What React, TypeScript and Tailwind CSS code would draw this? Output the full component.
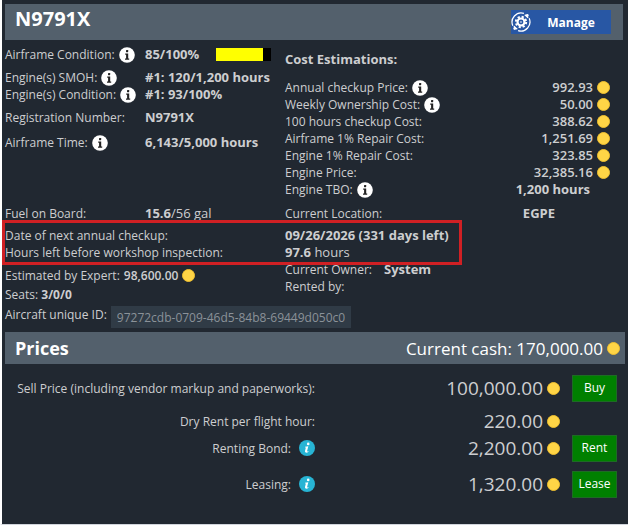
import type { ReactNode } from 'react';
import { clsx } from 'clsx';

const costs = [
  { label: 'Annual checkup Price:', value: '992.93', info: true },
  { label: 'Weekly Ownership Cost:', value: '50.00', info: true },
  { label: '100 hours checkup Cost:', value: '388.62' },
  { label: 'Airframe 1% Repair Cost:', value: '1,251.69' },
  { label: 'Engine 1% Repair Cost:', value: '323.85' },
  { label: 'Engine Price:', value: '32,385.16' },
];

const prices = [
  { label: 'Sell Price (including vendor markup and paperworks):', value: '100,000.00', action: 'Buy', row: 'h-7 mb-1.5' },
  { label: 'Dry Rent per flight hour:', value: '220.00', row: 'h-[26px]' },
  { label: 'Renting Bond:', value: '2,200.00', action: 'Rent', info: true, row: 'h-7' },
  { label: 'Leasing:', value: '1,320.00', action: 'Lease', info: true, row: 'h-11' },
];

function Coin() {
  return <span className="inline-block size-[13px] shrink-0 rounded-full border border-[#f0c030] bg-[#ffd546]" />;
}

function InfoIcon() {
  return (
    <svg viewBox="0 0 16 16" className="size-4 shrink-0" aria-hidden="true">
      <circle cx="8" cy="8" r="7.8" fill="#fff" />
      <rect x="7" y="3" width="2.2" height="2.2" rx="0.6" fill="#222" />
      <path d="M6.2 6.5h3v5h1v1.2H6v-1.2h1.1V7.7h-.9z" fill="#222" />
    </svg>
  );
}

function HelpIcon() {
  return (
    <svg viewBox="0 0 16 16" className="size-4 shrink-0" aria-hidden="true">
      <circle cx="8" cy="8" r="8" fill="#27b4d4" />
      <circle cx="9.2" cy="3.9" r="1.3" fill="#fff" />
      <path d="M6 6.8l3.3-.6-1.2 4.9q0 .7 1.3-.2l.2.5q-1.3 1.5-2.8 1.2-1.1-.2-.8-1.5l.8-3.4q0-.5-.8-.4z" fill="#fff" />
    </svg>
  );
}

function ManageIcon() {
  return (
    <svg viewBox="0 0 24 24" className="size-5" fill="none" stroke="#fff" aria-hidden="true">
      <path d="M15.5 1.6A11 11 0 0 0 2.2 16.5M8.5 22.4A11 11 0 0 0 21.8 7.5" strokeWidth="1.5" />
      <path d="M16.5 3.4A10 10 0 0 1 20.5 7M7.5 20.6A10 10 0 0 1 3.5 17" strokeWidth="1.5" />
      <circle cx="19.5" cy="4.2" r="1.7" fill="#fff" stroke="none" />
      <circle cx="4.5" cy="19.8" r="1.7" fill="#fff" stroke="none" />
      <circle cx="12" cy="12" r="6.2" strokeWidth="2.4" strokeDasharray="2.6 2.27" />
      <circle cx="12" cy="12" r="4.2" strokeWidth="2.6" />
      <circle cx="12" cy="12" r="1" fill="#fff" stroke="none" />
    </svg>
  );
}

function Field({ label, info, children, className }: { label: string; info?: boolean; children?: ReactNode; className?: string }) {
  return (
    <div className={clsx('flex items-center', className)}>
      <dt className="flex w-[140px] shrink-0 items-center gap-1 whitespace-nowrap">
        {label}
        {info && <InfoIcon />}
      </dt>
      <dd className="flex items-center whitespace-nowrap">{children}</dd>
    </div>
  );
}

export default function App() {
  return (
    <main className="border-b border-l-2 border-b-gray-300 border-l-white bg-[#212831] pt-1 pr-[3px] pb-[18px] pl-[3px] font-['Open_Sans','Noto_Sans',sans-serif] text-xs leading-[17px] text-[#cdced0] [&_dd]:text-[13px]">
      <header className="mr-0.5 flex h-9 items-start justify-between bg-[#53606c] pr-3 pl-2.5">
        <h1 className="text-xl leading-[30px] font-bold text-white">N9791X</h1>
        <button type="button" className="mt-1.5 flex h-6 w-[100px] items-center bg-[#2857a4] font-bold text-white">
          <ManageIcon />
          <span className="flex-1 text-center">Manage</span>
        </button>
      </header>

      <section className="grid grid-cols-[280px_1fr]">
        <dl className="pt-1.5">
          <Field label="Airframe Condition:" info className="mb-1.5">
            <b className="w-[71px]">85/100%</b>
            <span role="meter" aria-label="Airframe condition" aria-valuenow={85} className="block h-[13px] w-[55px] bg-black">
              <span className="block h-full bg-[#ff0]" style={{ width: '85%' }} />
            </span>
          </Field>
          <Field label="Engine(s) SMOH:" info>
            <b>#1: 120/1,200 hours</b>
          </Field>
          <Field label="Engine(s) Condition:" info className="mb-1.5">
            <b>#1: 93/100%</b>
          </Field>
          <Field label="Registration Number:" className="mb-2">
            <b>N9791X</b>
          </Field>
          <Field label="Airframe Time:" info>
            <b>6,143/5,000 hours</b>
          </Field>
        </dl>

        <div className="pt-[11px] pr-[15px]">
          <h2 className="mb-[11px] text-[13px] font-bold">Cost Estimations:</h2>
          <dl>
            {costs.map((cost) => (
              <div key={cost.label} className="flex items-center justify-between">
                <dt className="flex items-center gap-1">
                  {cost.label}
                  {cost.info && <InfoIcon />}
                </dt>
                <dd className="flex items-center gap-1 font-semibold">
                  {cost.value}
                  <Coin />
                </dd>
              </div>
            ))}
            <div className="flex items-center justify-between">
              <dt className="flex items-center gap-1">
                Engine TBO:
                <InfoIcon />
              </dt>
              <dd className="pr-5 font-bold">1,200 hours</dd>
            </div>
          </dl>
        </div>
      </section>

      <dl className="mt-[7px] grid grid-cols-[280px_1fr]">
        <Field label="Fuel on Board:">
          <b>15.6</b>/56 gal
        </Field>
        <div className="flex justify-between pr-[70px]">
          <dt>Current Location:</dt>
          <dd className="font-bold">EGPE</dd>
        </div>
      </dl>

      <dl className="relative mt-[5px] grid grid-cols-[280px_1fr]">
        <div className="pointer-events-none absolute -top-[7px] -bottom-1 -left-[3px] w-[460px] border-3 border-[#d02024]" />
        <dt>Date of next annual checkup:</dt>
        <dd className="font-bold">09/26/2026 (331 days left)</dd>
        <dt>Hours left before workshop inspection:</dt>
        <dd>
          <b>97.6</b> hours
        </dd>
      </dl>

      <section className="grid grid-cols-[280px_1fr]">
        <div className="pt-1.5">
          <p className="flex items-center gap-1">
            Estimated by Expert: <b className="font-semibold">98,600.00</b> <Coin />
          </p>
          <p className="mt-0.5">
            Seats: <b>3/0/0</b>
          </p>
        </div>
        <dl>
          <div className="flex gap-3">
            <dt>Current Owner:</dt>
            <dd className="font-bold">System</dd>
          </div>
          <div>
            <dt>Rented by:</dt>
          </div>
        </dl>
      </section>

      <div className="mt-[3px] flex items-start gap-1">
        <label htmlFor="aircraft-id">Aircraft unique ID:</label>
        <input
          id="aircraft-id"
          readOnly
          value="97272cdb-0709-46d5-84b8-69449d050c0c"
          className="h-[22px] w-60 bg-[#303b46] px-1.5 text-xs text-[#8b9299]"
        />
      </div>

      <section>
        <div className="mt-1 flex h-8 items-center justify-between bg-[#53606c] pr-[5px] pl-2.5 text-white">
          <h2 className="text-lg font-bold">Prices</h2>
          <p className="flex items-center gap-1 text-[17px]">
            Current cash: 170,000.00 <Coin />
          </p>
        </div>
        <ul className="mt-2.5">
          {prices.map((price) => (
            <li key={price.label} className={clsx('grid grid-cols-2 items-center', price.row)}>
              <span className="flex items-center justify-end gap-2 whitespace-nowrap">
                {price.label}
                {price.info && <HelpIcon />}
              </span>
              <span className="flex items-center justify-end gap-1 pr-2 text-[19px]">
                {price.value}
                <Coin />
                <span className="ml-2 w-[45px] text-xs">
                  {price.action && (
                    <button type="button" className="block h-[27px] w-full border border-[#1e6b25] bg-[#008000] text-white">
                      {price.action}
                    </button>
                  )}
                </span>
              </span>
            </li>
          ))}
        </ul>
      </section>
    </main>
  );
}
